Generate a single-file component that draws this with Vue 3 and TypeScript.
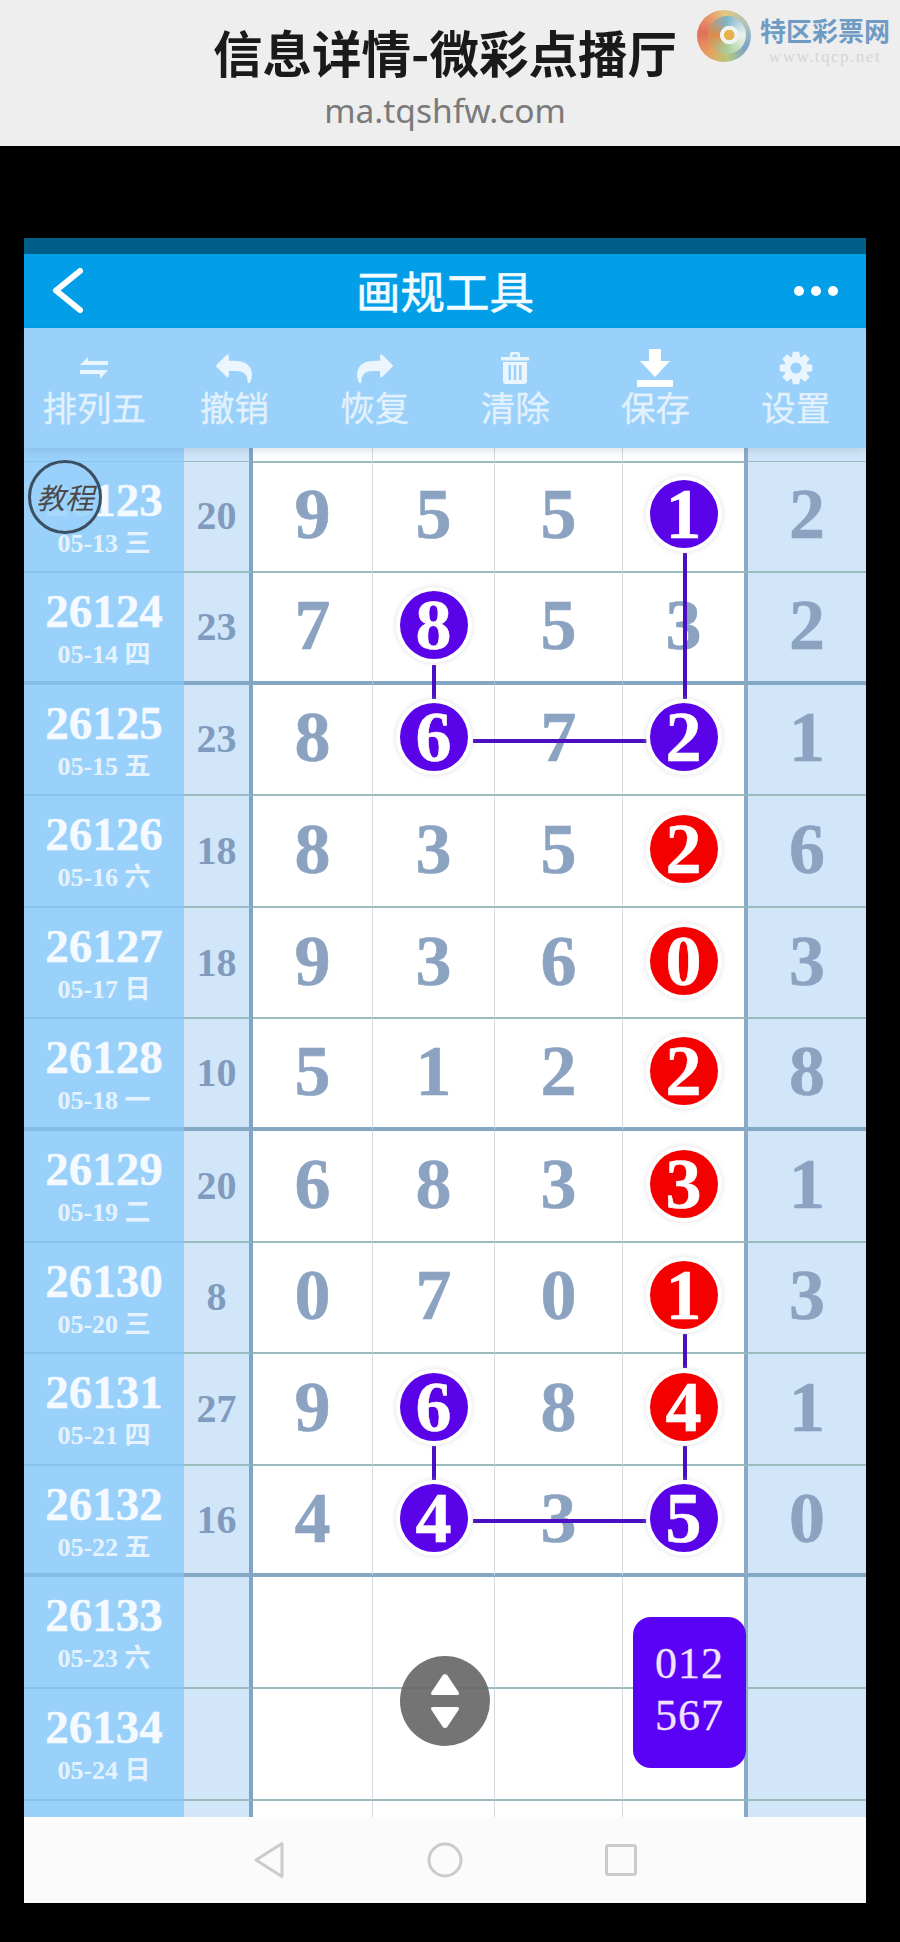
<template>
  <div class="page">
    <header class="banner">
      <h1 class="banner-title">信息详情-微彩点播厅</h1>
      <p class="banner-url">ma.tqshfw.com</p>
      <div class="watermark">
        <div class="swirl"><div class="swirl-inner"></div></div>
        <div class="brand">
          <span class="brand-name">特区彩票网</span>
          <span class="brand-url">www.tqcp.net</span>
        </div>
      </div>
    </header>

    <main class="screen">
      <div class="status"></div>

      <div class="appbar">
        <svg class="back" width="34" height="47" viewBox="0 0 34 47">
          <path d="M28 4 L4 23.500 L28 43" fill="none" stroke="#fff" stroke-width="6" stroke-linecap="round" stroke-linejoin="round" />
        </svg>
        <span class="appbar-title">画规工具</span>
        <div class="dots"><i></i><i></i><i></i></div>
      </div>

      <nav class="toolbar">
        <div v-for="t in tools" :key="t.label" class="tool">
          <div class="tool-icon">
            <svg v-if="t.icon === 'swap'" width="30" height="24" viewBox="0 0 30 24" fill="#eaf5fe">
              <path d="M9 1 L9 5 L29 5 L29 9 L1 9 Z" />
              <path d="M1 14 L29 14 L21 23 L21 18 L1 18 Z" />
            </svg>
            <svg v-else-if="t.icon === 'undo'" width="36" height="30" viewBox="0 0 1792 1500" fill="#eaf5fe">
              <path :d="replyPath" />
            </svg>
            <svg v-else-if="t.icon === 'redo'" class="flip" width="36" height="30" viewBox="0 0 1792 1500" fill="#eaf5fe">
              <path :d="replyPath" />
            </svg>
            <svg v-else-if="t.icon === 'trash'" width="30" height="34" viewBox="0 0 30 34">
              <path d="M1 6 H29 V9.500 H1 Z M10 6 V3 Q10 1 12 1 H18 Q20 1 20 3 V6 H17.500 V3.500 H12.500 V6 Z" fill="#eaf5fe" />
              <path d="M3 11 H27 V30 Q27 33 24 33 H6 Q3 33 3 30 Z M8.500 14 V29 H11 V14 Z M13.800 14 V29 H16.200 V14 Z M19 14 V29 H21.500 V14 Z" fill="#eaf5fe" fill-rule="evenodd" />
            </svg>
            <svg v-else-if="t.icon === 'save'" width="38" height="40" viewBox="0 0 38 40" fill="#fff">
              <path d="M13 1 H25 V13 H34 L19 29 L4 13 H13 Z" />
              <rect x="1" y="32" width="36" height="7" rx="1" />
            </svg>
            <svg v-else width="34" height="34" viewBox="-17 -17 34 34" fill="#eaf5fe">
              <path :d="gearPath" fill-rule="evenodd" />
            </svg>
          </div>
          <span class="tool-label">{{ t.label }}</span>
        </div>
      </nav>

      <section class="board">
        <div v-for="r in rows" :key="r.key" class="row" :class="[`row-${r.kind}`, { thick: r.thick }]">
          <div class="cell issue">
            <template v-if="r.issue">
              <span class="issue-no">{{ r.issue }}</span>
              <span class="issue-date">{{ r.date }}</span>
            </template>
          </div>
          <div class="cell sum">{{ r.sum }}</div>
          <div v-for="(d, j) in r.digits" :key="j" class="cell digit" :class="{ 'cell-end': j === 3 }">
            <span v-if="d.color" class="ball" :class="d.color">{{ d.n }}</span>
            <template v-else>{{ d.n }}</template>
          </div>
          <div class="cell digit extra">{{ r.extra }}</div>
        </div>

        <svg class="links" width="842" height="1369">
          <line v-for="(l, i) in links" :key="i" :x1="l[0]" :y1="l[1]" :x2="l[2]" :y2="l[3]" stroke="#4a0fc0" stroke-width="4" />
        </svg>

        <div class="tutorial">教程</div>

        <div class="updown">
          <svg width="30" height="56" viewBox="0 0 30 56" fill="#fff">
            <path d="M15 1 Q16.500 1 17.500 2.500 L28.500 19 Q30 22 27 22 H3 Q0 22 1.500 19 L12.500 2.500 Q13.500 1 15 1 Z" />
            <path d="M15 55 Q16.500 55 17.500 53.500 L28.500 37 Q30 34 27 34 H3 Q0 34 1.500 37 L12.500 53.500 Q13.500 55 15 55 Z" />
          </svg>
        </div>

        <div class="filter">012<br />567</div>
      </section>

      <footer class="sysnav">
        <svg width="32" height="38" viewBox="0 0 32 38">
          <path d="M29 2.500 V35.500 L3 19 Z" fill="none" stroke="#cbcbcb" stroke-width="3" stroke-linejoin="round" />
        </svg>
        <svg width="36" height="36" viewBox="0 0 36 36">
          <circle cx="18" cy="18" r="16" fill="none" stroke="#cbcbcb" stroke-width="3" />
        </svg>
        <svg width="32" height="32" viewBox="0 0 32 32">
          <rect x="1.500" y="1.500" width="29" height="29" rx="2" fill="none" stroke="#cbcbcb" stroke-width="3" />
        </svg>
      </footer>
    </main>
  </div>
</template>

<script setup lang="ts">
type Ball = "purple" | "red" | "";

interface Digit {
  n: number | string;
  color: Ball;
}

const replyPath =
  "M1792 1120q0 166-127 451-3 7-10.500 24t-13.500 30-13 22q-12 17-28 17-15 0-23.500-10t-8.500-25q0-9 2.500-26.500t2.500-23.500q5-68 5-123 0-101-17.500-181t-48.500-138.500-80-101-105.500-69.500-133-42.500-154-21.500-175.500-6h-224v256q0 26-19 45t-45 19-45-19l-512-512q-19-19-19-45t19-45l512-512q19-19 45-19t45 19 19 45v256h224q713 0 875 403 53 134 53 333z";

const tools = [
  { label: "排列五", icon: "swap" },
  { label: "撤销", icon: "undo" },
  { label: "恢复", icon: "redo" },
  { label: "清除", icon: "trash" },
  { label: "保存", icon: "save" },
  { label: "设置", icon: "gear" },
];

// 8 tooth gear with a round hole
const gearPath = (() => {
  const pts: string[] = [];
  for (let i = 0; i < 8; i++) {
    const a = (i * Math.PI) / 4;
    const corners: [number, number][] = [
      [a - 0.36, 11.5],
      [a - 0.2, 16.5],
      [a + 0.2, 16.5],
      [a + 0.36, 11.5],
    ];
    for (const [t, r] of corners) {
      pts.push(`${(Math.cos(t) * r).toFixed(2)} ${(Math.sin(t) * r).toFixed(2)}`);
    }
  }
  return `M${pts.join(" L")} Z M5.500 0 A5.500 5.500 0 1 0 -5.500 0 A5.500 5.500 0 1 0 5.500 0 Z`;
})();

// n: plain digit, p: purple ball, r: red ball
const p = (n: number): Digit => ({ n, color: "purple" });
const r = (n: number): Digit => ({ n, color: "red" });
const n = (v: number): Digit => ({ n: v, color: "" });

const data: { issue: number; date: string; sum: number; digits: Digit[]; extra: number; thick?: boolean }[] = [
  { issue: 26123, date: "05-13 三", sum: 20, digits: [n(9), n(5), n(5), p(1)], extra: 2 },
  { issue: 26124, date: "05-14 四", sum: 23, digits: [n(7), p(8), n(5), n(3)], extra: 2, thick: true },
  { issue: 26125, date: "05-15 五", sum: 23, digits: [n(8), p(6), n(7), p(2)], extra: 1 },
  { issue: 26126, date: "05-16 六", sum: 18, digits: [n(8), n(3), n(5), r(2)], extra: 6 },
  { issue: 26127, date: "05-17 日", sum: 18, digits: [n(9), n(3), n(6), r(0)], extra: 3 },
  { issue: 26128, date: "05-18 一", sum: 10, digits: [n(5), n(1), n(2), r(2)], extra: 8, thick: true },
  { issue: 26129, date: "05-19 二", sum: 20, digits: [n(6), n(8), n(3), r(3)], extra: 1 },
  { issue: 26130, date: "05-20 三", sum: 8, digits: [n(0), n(7), n(0), r(1)], extra: 3 },
  { issue: 26131, date: "05-21 四", sum: 27, digits: [n(9), p(6), n(8), r(4)], extra: 1 },
  { issue: 26132, date: "05-22 五", sum: 16, digits: [n(4), p(4), n(3), p(5)], extra: 0, thick: true },
];

const blank: Digit[] = [n(0), n(0), n(0), n(0)].map(() => ({ n: "", color: "" }));

const rows = [
  { key: "top", kind: "head", issue: 0, date: "", sum: "", digits: blank, extra: "", thick: false },
  ...data.map((d) => ({ key: `r${d.issue}`, kind: "full", ...d, sum: String(d.sum), extra: String(d.extra), thick: !!d.thick })),
  { key: "r26133", kind: "full", issue: 26133, date: "05-23 六", sum: "", digits: blank, extra: "", thick: false },
  { key: "r26134", kind: "full", issue: 26134, date: "05-24 日", sum: "", digits: blank, extra: "", thick: false },
  { key: "end", kind: "tail", issue: 0, date: "", sum: "", digits: blank, extra: "", thick: false },
];

// x1 y1 x2 y2, board coordinates
const links: number[][] = [
  [661, 105, 661, 251],
  [410, 217, 410, 251],
  [449, 293, 623, 293],
  [661, 886, 661, 920],
  [661, 998, 661, 1032],
  [410, 998, 410, 1032],
  [449, 1073, 623, 1073],
];
</script>

<style>
html,
body {
  margin: 0;
  background: #000;
}
</style>

<style scoped>
.page {
  width: 900px;
  height: 1942px;
  overflow: hidden;
  background: #000;
  font-family: "Noto Sans CJK SC", "Noto Sans", sans-serif;
}

.banner {
  position: relative;
  height: 146px;
  background: #eeeeee;
  display: flex;
  flex-direction: column;
  align-items: center;
  padding-right: 10px;
  box-sizing: border-box;
}

.banner-title {
  margin: 20px 0 0;
  font-size: 49.500px;
  line-height: 64px;
  font-weight: 700;
  color: #1a1a1a;
  white-space: nowrap;
}

.banner-url {
  margin: 4px 0 0;
  font-family: "Noto Sans", sans-serif;
  font-size: 33.500px;
  line-height: 44px;
  color: #7a7a7a;
}

.watermark {
  position: absolute;
  left: 697px;
  top: 10px;
  display: flex;
  gap: 7px;
}

.swirl {
  width: 54px;
  height: 52px;
  border-radius: 50%;
  background: conic-gradient(#e2c77e 0deg, #a9bfc0 70deg, #7aa3c8 120deg, #b6c77e 170deg, #e8a25e 220deg, #e0705a 280deg, #e8a070 330deg, #e2c77e 360deg);
  display: flex;
  align-items: center;
  justify-content: center;
}

.swirl-inner {
  width: 38px;
  height: 38px;
  margin: 0 0 2px 6px;
  border-radius: 50%;
  background:
    radial-gradient(circle at 56% 50%, #e6b04a 0 5px, #eef3f0 5.500px 9px, transparent 9.500px),
    conic-gradient(#7fb5c8 0deg, #eef3f0 90deg, #a8cf9a 180deg, #e08a4a 270deg, #7fb5c8 360deg);
}

.brand {
  display: flex;
  flex-direction: column;
  align-items: center;
  width: 134px;
  padding-top: 5px;
}

.brand-name {
  font-size: 26px;
  line-height: 30px;
  font-weight: 700;
  color: #6f9cc4;
  white-space: nowrap;
}

.brand-url {
  margin-top: 3px;
  font-family: "Liberation Serif", serif;
  font-size: 17px;
  line-height: 18px;
  letter-spacing: 1.500px;
  color: #d5d5d5;
}

.screen {
  width: 842px;
  margin: 92px 0 0 24px;
}

.status {
  height: 16px;
  background: #005f88;
}

.appbar {
  height: 74px;
  background: #029ee8;
  display: flex;
  align-items: center;
  justify-content: center;
  position: relative;
}

.back {
  position: absolute;
  left: 28px;
  top: 13px;
}

.appbar-title {
  font-size: 44.500px;
  line-height: 74px;
  font-weight: 400;
  color: #f2fbff;
  -webkit-text-stroke: 0.6px #f2fbff;
  margin-top: -2px;
}

.dots {
  position: absolute;
  right: 28px;
  top: 32px;
  display: flex;
  gap: 7px;
}

.dots i {
  width: 10px;
  height: 10px;
  border-radius: 50%;
  background: #fff;
}

.toolbar {
  position: relative;
  z-index: 5;
  height: 120px;
  background: #99d1fb;
  display: flex;
  box-shadow: 0 3px 8px rgba(70, 100, 130, 0.18);
}

.tool {
  flex: 1;
  display: flex;
  flex-direction: column;
  align-items: center;
  padding-top: 20px;
}

.tool-icon {
  height: 40px;
  display: flex;
  align-items: center;
  justify-content: center;
}

.flip {
  transform: scaleX(-1);
}

.tool-label {
  margin-top: -2px;
  font-size: 34.500px;
  line-height: 40px;
  color: #e2f1fd;
  -webkit-text-stroke: 0.3px #e2f1fd;
}

.board {
  position: relative;
  height: 1369px;
  overflow: hidden;
  background: #fff;
  font-family: "Liberation Serif", "Noto Sans CJK SC", serif;
  font-weight: 700;
}

.row {
  display: grid;
  grid-template-columns: 160px 69px 120px 122px 128px 125px 118px;
  height: 111.6px;
}

.row-head {
  height: 13.500px;
}

.row-tail {
  height: 18px;
}

.cell {
  box-sizing: border-box;
  display: flex;
  align-items: center;
  justify-content: center;
  border-bottom: 2px solid #9abcbc;
}

.row-tail .cell {
  border-bottom: 0;
}

.thick .cell {
  border-bottom: 4.500px solid #84a8c4;
}

.issue {
  background: #99d1fb;
  flex-direction: column;
  justify-content: flex-start;
  padding-top: 13px;
  color: #f4faff;
  border-bottom-color: #8ac3ee;
}

.thick .issue {
  border-bottom-color: #86bde8;
}

.issue-no {
  font-size: 47px;
  line-height: 50px;
  -webkit-text-stroke: 0.4px #f4faff;
}

.issue-date {
  font-size: 26px;
  line-height: 37px;
  color: #e6f3fe;
  white-space: pre;
}

.sum {
  background: #d2e6fa;
  border-right: 4px solid #7fa5c6;
  font-size: 40px;
  line-height: 1;
  color: #7f9bbd;
}

.digit {
  border-right: 1.500px solid #d2dbe2;
  padding-bottom: 4px;
  font-size: 72px;
  line-height: 1;
  color: #8ba3c1;
  -webkit-text-stroke: 0.6px #8ba3c1;
}

.cell-end {
  border-right: 4px solid #8aaac6;
}

.extra {
  background: #d2e6fa;
  border-right: 0;
}

.ball {
  position: relative;
  z-index: 2;
  width: 68px;
  height: 68px;
  border-radius: 50%;
  display: flex;
  align-items: center;
  justify-content: center;
  color: #fff;
  -webkit-text-stroke: 0.6px #fff;
  box-shadow: 0 0 0 4px #fff, 0 0 4px 5px rgba(190, 190, 190, 0.35);
}

.ball.purple {
  background: #5a02e8;
}

.ball.red {
  background: #f50000;
}

.links {
  position: absolute;
  left: 0;
  top: 0;
  z-index: 1;
}

.tutorial {
  position: absolute;
  z-index: 3;
  left: 4px;
  top: 12px;
  width: 74px;
  height: 74px;
  box-sizing: border-box;
  border: 3.500px solid #3c4f60;
  border-radius: 50%;
  background: rgba(153, 209, 251, 0.85);
  display: flex;
  align-items: center;
  justify-content: center;
  padding-bottom: 2px;
  font-family: "Noto Sans CJK SC", sans-serif;
  font-size: 29px;
  font-style: italic;
  font-weight: 400;
  white-space: nowrap;
  color: #4a4a4a;
}

.updown {
  position: absolute;
  z-index: 3;
  left: 376px;
  top: 1208px;
  width: 90px;
  height: 90px;
  border-radius: 50%;
  background: rgba(104, 104, 104, 0.92);
  display: flex;
  align-items: center;
  justify-content: center;
}

.filter {
  position: absolute;
  z-index: 3;
  left: 609px;
  top: 1169px;
  width: 113px;
  height: 151px;
  box-sizing: border-box;
  padding-top: 21px;
  border-radius: 18px;
  background: #5a02f5;
  text-align: center;
  font-size: 44px;
  line-height: 52px;
  font-weight: 400;
  letter-spacing: 1px;
  color: #f3e2ff;
  -webkit-text-stroke: 0.3px #f3e2ff;
}

.sysnav {
  height: 86px;
  background: #fbfbfc;
  display: flex;
  align-items: center;
  justify-content: center;
  gap: 142px;
}
</style>
